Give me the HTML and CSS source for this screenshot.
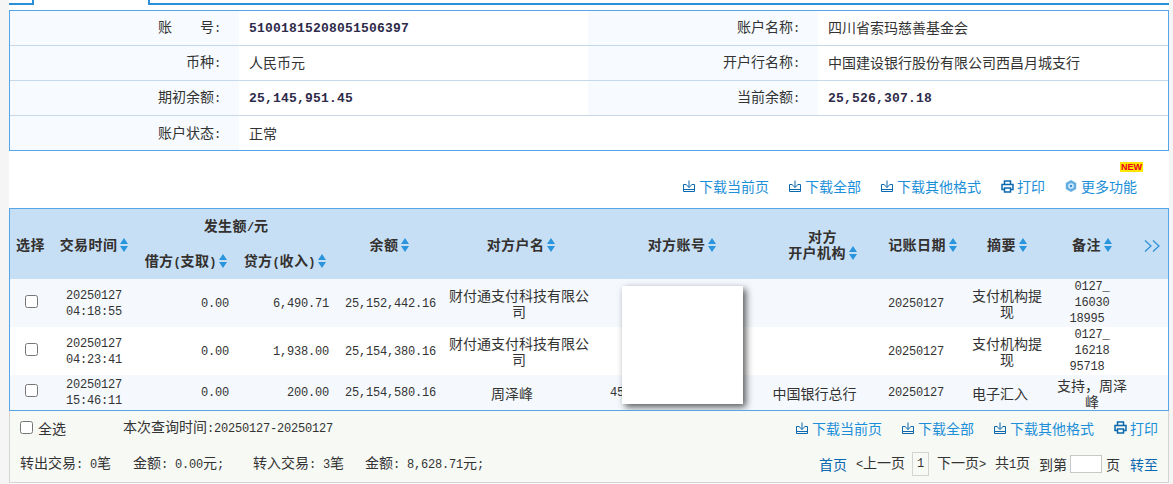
FILE: index.html
```html
<!DOCTYPE html>
<html lang="zh-CN">
<head>
<meta charset="utf-8">
<title>账户明细</title>
<link rel="stylesheet" href="styles.css">
</head>
<body>
<svg class="defs" width="0" height="0" aria-hidden="true">
  <symbol id="i-down" viewBox="0 0 12 12"><path d="M6 .5v7M3.500 5L6 7.500 8.500 5M3.500 4.500H.5v7h11v-7h-3M1 9.500h10" fill="none" stroke="currentColor" stroke-width="1"/></symbol>
  <symbol id="i-print" viewBox="0 0 13 13"><path d="M3.500 4V1h6v3M3.500 9.500h-2.500V4.500h11v5h-2.500M3.500 8h6v4h-6z" fill="none" stroke="currentColor" stroke-width="1.500"/></symbol>
  <symbol id="i-gear" viewBox="0 0 12 12"><path d="M6 0l5.200 3v6L6 12 .8 9V3z" fill="#62ade2"/><circle cx="6" cy="6" r="2.800" fill="#dcefff"/><circle cx="6" cy="6" r="1.300" fill="#3b8fd0"/></symbol>
</svg>
<div class="page">
  <div class="tabs"><div class="tab-left"></div><div class="tab-active"></div><div class="tab-right"></div></div>

  <table class="info">
    <colgroup><col class="c-l1"><col class="c-v1"><col class="c-l2"><col class="c-v2"></colgroup>
    <tr><th>账&emsp;&emsp;号<span class="n">:</span></th><td><span class="b">51001815208051506397</span></td><th>账户名称<span class="n">:</span></th><td>四川省索玛慈善基金会</td></tr>
    <tr><th>币种<span class="n">:</span></th><td>人民币元</td><th>开户行名称<span class="n">:</span></th><td>中国建设银行股份有限公司西昌月城支行</td></tr>
    <tr><th>期初余额<span class="n">:</span></th><td><span class="b">25,145,951.45</span></td><th>当前余额<span class="n">:</span></th><td><span class="b">25,526,307.18</span></td></tr>
    <tr class="last"><th>账户状态<span class="n">:</span></th><td>正常</td><td class="blank"></td><td class="blank"></td></tr>
  </table>

  <div class="toolbar">
    <a class="act"><svg class="ico"><use href="#i-down"/></svg>下载当前页</a>
    <a class="act"><svg class="ico"><use href="#i-down"/></svg>下载全部</a>
    <a class="act"><svg class="ico"><use href="#i-down"/></svg>下载其他格式</a>
    <a class="act"><svg class="ico ico-p"><use href="#i-print"/></svg>打印</a>
    <a class="act more"><svg class="ico"><use href="#i-gear"/></svg>更多功能<span class="new">NEW</span></a>
  </div>

  <div class="grid-wrap">
    <table class="grid">
      <colgroup>
        <col class="g1"><col class="g2"><col class="g3"><col class="g4"><col class="g5"><col class="g6"><col class="g7"><col class="g8"><col class="g9"><col class="g10"><col class="g11"><col class="g12">
      </colgroup>
      <thead>
        <tr>
          <th rowspan="2">选择</th>
          <th rowspan="2">交易时间<i class="sort"></i></th>
          <th colspan="2">发生额<span class="pn">/</span>元</th>
          <th rowspan="2">余额<i class="sort"></i></th>
          <th rowspan="2" class="name">对方户名<i class="sort"></i></th>
          <th rowspan="2">对方账号<i class="sort"></i></th>
          <th rowspan="2" class="org">对方<br>开户机构<i class="sort"></i></th>
          <th rowspan="2" class="nudge">记账日期<i class="sort"></i></th>
          <th rowspan="2">摘要<i class="sort"></i></th>
          <th rowspan="2">备注<i class="sort"></i></th>
          <th rowspan="2" class="next"><svg class="chev" viewBox="0 0 16 12"><path d="M1 .5L7 6l-6 5.500M9 .5L15 6l-6 5.500" fill="none" stroke="currentColor" stroke-width="1.200"/></svg></th>
        </tr>
        <tr>
          <th>借方<span class="pn">(</span>支取<span class="pn">)</span><i class="sort"></i></th>
          <th>贷方<span class="pn">(</span>收入<span class="pn">)</span><i class="sort"></i></th>
        </tr>
      </thead>
      <tbody>
        <tr class="alt h48">
          <td><input type="checkbox"></td>
          <td class="n">20250127<br>04:18:55</td>
          <td class="n num">0.00</td>
          <td class="n num">6,490.71</td>
          <td class="n num bal">25,152,442.16</td>
          <td>财付通支付科技有限公司</td>
          <td></td>
          <td></td>
          <td class="n">20250127</td>
          <td class="wrap">支付机构提现</td>
          <td class="n rem">0127_<br>16030<br><span class="shift">18995</span></td>
          <td></td>
        </tr>
        <tr class="h48">
          <td><input type="checkbox"></td>
          <td class="n">20250127<br>04:23:41</td>
          <td class="n num">0.00</td>
          <td class="n num">1,938.00</td>
          <td class="n num bal">25,154,380.16</td>
          <td>财付通支付科技有限公司</td>
          <td></td>
          <td></td>
          <td class="n">20250127</td>
          <td class="wrap">支付机构提现</td>
          <td class="n rem">0127_<br>16218<br><span class="shift">95718</span></td>
          <td></td>
        </tr>
        <tr class="alt h35">
          <td><input type="checkbox"></td>
          <td class="n tight">20250127<br>15:46:11</td>
          <td class="n num tight">0.00</td>
          <td class="n num tight">200.00</td>
          <td class="n num bal tight">25,154,580.16</td>
          <td class="lean">周泽峰</td>
          <td class="n acct tight">45</td>
          <td class="bank">中国银行总行</td>
          <td class="n tight">20250127</td>
          <td class="lean">电子汇入</td>
          <td class="wrap note">支持&#xFF0C;周泽峰</td>
          <td></td>
        </tr>
      </tbody>
    </table>
    <div class="mask"></div>
  </div>

  <div class="foot">
    <div class="foot-row top">
      <label class="all"><input type="checkbox">全选</label>
      <span class="range">本次查询时间<span class="n">:20250127-20250127</span></span>
      <div class="foot-acts">
        <a class="act"><svg class="ico"><use href="#i-down"/></svg>下载当前页</a>
        <a class="act"><svg class="ico"><use href="#i-down"/></svg>下载全部</a>
        <a class="act"><svg class="ico"><use href="#i-down"/></svg>下载其他格式</a>
        <a class="act"><svg class="ico ico-p"><use href="#i-print"/></svg>打印</a>
      </div>
    </div>
    <div class="foot-row">
      <span class="sum s1">转出交易<span class="n">: 0</span>笔</span>
      <span class="sum s2">金额<span class="n">: 0.00</span>元<span class="n">;</span></span>
      <span class="sum s3">转入交易<span class="n">: 3</span>笔</span>
      <span class="sum">金额<span class="n">: 8,628.71</span>元<span class="n">;</span></span>
      <div class="pager">
        <a class="plink">首页</a>
        <span class="p1"><span class="n">&lt;</span>上一页</span>
        <span class="cur n">1</span>
        <span class="p2">下一页<span class="n">&gt;</span></span>
        <span class="p3">共<span class="n">1</span>页</span>
        <span class="p4">到第</span>
        <input class="goto" type="text">
        <span class="p5">页</span>
        <a class="plink go">转至</a>
      </div>
    </div>
  </div>
</div>
</body>
</html>
```
FILE: styles.css
```css
* { box-sizing: border-box; }
html, body { margin: 0; height: 484px; overflow: hidden; }
body {
  background: #f5f5f5;
  font-family: "Noto Sans CJK SC", "Liberation Sans", sans-serif;
  font-size: 14px;
  line-height: 16px;
  color: #333;
}
.defs { position: absolute; }
.page { margin-left: 9px; width: 1160px; height: 484px; background: #fff; }

.n { font-family: "Liberation Mono", monospace; font-size: 12px; letter-spacing: -.2px; }
.b { font-family: "Liberation Mono", monospace; font-size: 13px; font-weight: bold; letter-spacing: .2px; color: #2e2a4a; vertical-align: -1px; }
.pn { font-family: "Liberation Mono", monospace; font-size: 12px; letter-spacing: -.2px; }

.tabs { display: flex; height: 5px; margin-bottom: 5px; }
.tab-left { width: 25px; border-bottom: 2px solid #2a8fd8; border-right: 2px solid #2a8fd8; }
.tab-active { width: 114px; }
.tab-right { flex: 1; border-bottom: 2px solid #2a8fd8; border-left: 2px solid #2a8fd8; }

.info { width: 1160px; height: 141px; table-layout: fixed; border-collapse: separate; border-spacing: 0; border: 1px solid #55a6e8; }
.c-l1 { width: 229px; } .c-v1 { width: 349px; } .c-l2 { width: 230px; } .c-v2 { width: 350px; }
.info th, .info td { height: 35px; padding: 0 0 2px; font-weight: normal; border-bottom: 1px solid #c5d9ea; }
.info tr.last th, .info tr.last td { border-bottom: 0; height: 34px; padding-bottom: 0; }
.info th { background: #f7fbff; text-align: right; padding-right: 18px; }
.info td { padding-left: 10px; }
.info .blank { background: #fff; }

.toolbar { height: 57px; padding: 25px 32px 0 0; display: flex; justify-content: flex-end; gap: 20px; }
.act { display: inline-flex; align-items: center; height: 20px; gap: 4px; color: #1c8fd8; white-space: nowrap; }
.ico { width: 12px; height: 12px; color: #0b67ae; flex: none; }
.ico-p { width: 13px; height: 13px; margin-right: -1px; }
.more { position: relative; }
.new {
  position: absolute; left: 55px; top: -14px;
  font: bold 9px/10px "Liberation Sans", sans-serif;
  color: #e8001c; background: #ffe400; padding: 0 1px;
}

.grid-wrap { position: relative; height: 203px; border: 1px solid #55a6e8; overflow: hidden; background: #fff; }
.grid { width: 1158px; table-layout: fixed; border-collapse: collapse; }
.g1 { width: 41px; } .g2 { width: 86px; } .g3 { width: 98px; } .g4 { width: 100px; }
.g5 { width: 109px; } .g6 { width: 150px; } .g7 { width: 176px; } .g8 { width: 97px; }
.g9 { width: 98px; } .g10 { width: 84px; } .g11 { width: 86px; } .g12 { width: 33px; }
.grid th { height: 35px; padding: 0; background: #c6dff5; font-weight: bold; letter-spacing: .4px; text-align: center; color: #33302e; white-space: nowrap; }
.grid th.name { padding-left: 4px; }
.grid th.org { padding-left: 8px; }
.grid th.nudge { padding-left: 13px; }
.grid td { padding: 0; text-align: center; vertical-align: middle; }
.grid td.n { padding-top: 2px; }
.grid td.rem { padding-top: 0; }
.grid td.tight { padding-top: 0; }
.grid td input { margin: 0 0 5px 1px; width: 13px; height: 13px; vertical-align: middle; }
.h48 td { height: 48px; }
.h35 td { height: 35px; }
.alt td { background: #f5f9fd; }
.grid td.num { text-align: right; padding-right: 6px; }
.grid td.bal { padding-right: 8px; }
.grid td.acct { text-align: left; padding-left: 16px; }
.grid td.bank { padding-right: 8px; }
.grid td.wrap { padding: 0 7px; }
.grid td.note { padding: 0 8px; }
.grid td.lean { padding-right: 14px; }
.shift { padding-right: 10px; }
.grid th.next { color: #2a8fd8; }
.chev { width: 16px; height: 12px; vertical-align: middle; }

.sort { display: inline-block; position: relative; width: 8px; height: 14px; margin-left: 3px; vertical-align: -2px; }
.sort::before, .sort::after { content: ""; position: absolute; left: 0; border-left: 4px solid transparent; border-right: 4px solid transparent; }
.sort::before { top: 0; border-bottom: 6px solid #2a94dc; }
.sort::after { bottom: 0; border-top: 6px solid #2a94dc; }

.mask { position: absolute; left: 612px; top: 77px; width: 121px; height: 118px; background: #fff; box-shadow: 3px 3px 7px rgba(0,0,0,.65); }

.foot { height: 72px; background: #f7f9f5; border: 1px solid #d4d4d4; border-top: 0; padding: 0 10px; }
.foot-row { display: flex; align-items: center; height: 35px; }
.foot-row.top { padding-bottom: 2px; }
.all { display: inline-flex; align-items: center; gap: 5px; width: 103px; }
.all input { margin: 0; width: 13px; height: 13px; }
.foot-acts { margin-left: auto; display: flex; gap: 20px; }
.sum { white-space: nowrap; }
.s1 { width: 113px; } .s2 { width: 120px; } .s3 { width: 112px; }
.pager { margin-left: auto; display: flex; align-items: center; }
.plink { color: #0b67ae; }
.p1 { margin-left: 9px; }
.cur { margin-left: 7px; width: 17px; height: 24px; line-height: 22px; border: 1px solid #d4d4d4; text-align: center; }
.p2 { margin-left: 8px; }
.p3 { margin-left: 9px; }
.p4 { margin-left: 9px; }
.goto { margin: 0 3px; width: 32px; height: 18px; border: 1px solid #c8c8c8; background: #fff; padding: 0; }
.p5 { margin-left: 1px; }
.go { margin-left: 10px; }
```
